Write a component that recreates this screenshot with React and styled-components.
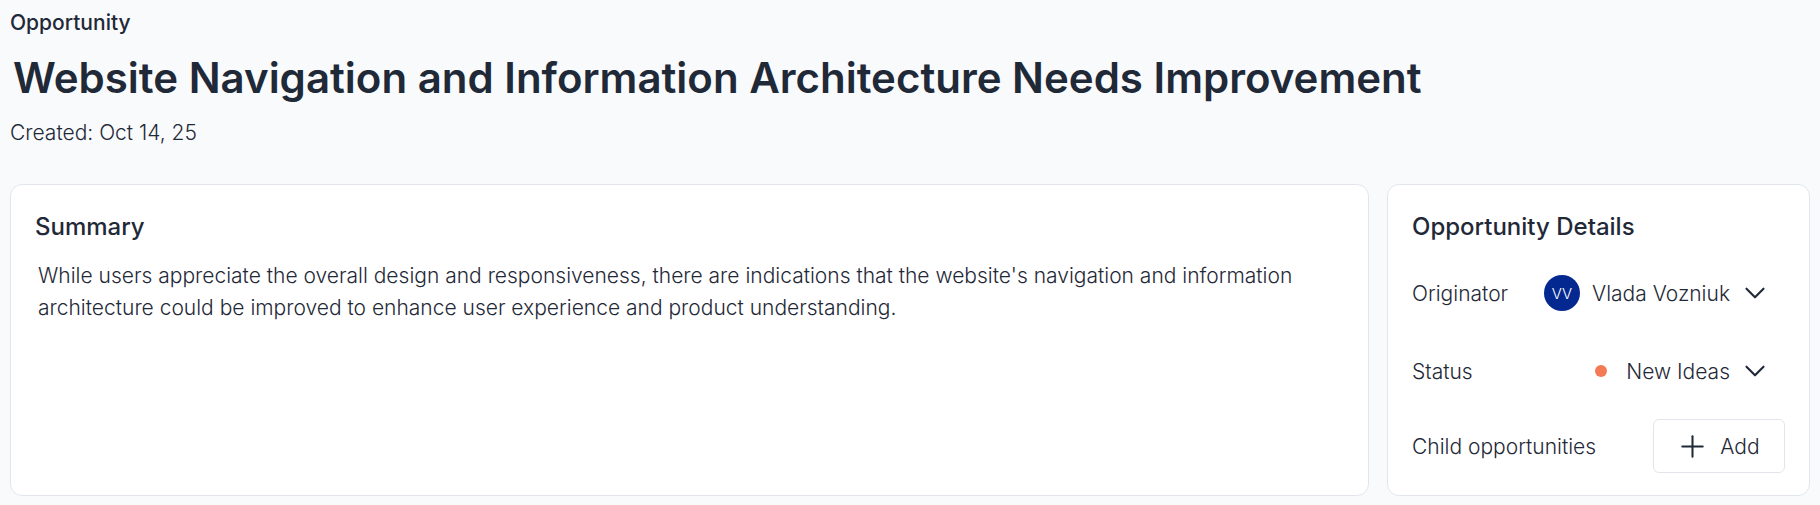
import React from 'react'
import styled, { createGlobalStyle } from 'styled-components'
import { ChevronDown, Plus } from 'lucide-react'

const GlobalStyle = createGlobalStyle`
  html, body {
    margin: 0;
    background: #f9fafc;
    font-family: Inter, "Liberation Sans", sans-serif;
    color: #1f2937;
  }
`

const Page = styled.div`
  height: 505px;
  box-sizing: border-box;
  padding: 9px 10px 10px 10px;
  overflow: hidden;
`

const Eyebrow = styled.div`
  font-size: 21px;
  line-height: 28px;
  font-weight: 500;
`

const Title = styled.h1`
  margin: 13px 0 0 3px;
  font-size: 42px;
  line-height: 56px;
  font-weight: 600;
  color: #1f2937;
`

const Created = styled.div`
  margin-top: 13px;
  font-size: 21px;
  line-height: 28px;
  font-weight: 300;
  color: #1f2937;
`

const Columns = styled.div`
  margin-top: 37px;
  display: grid;
  grid-template-columns: 1fr 423px;
  gap: 18px;
`

const Card = styled.section`
  box-sizing: border-box;
  height: 312px;
  background: #fff;
  border: 1px solid #e2e6ec;
  border-radius: 12px;
  padding: 26px 24px;
`

const CardTitle = styled.h2`
  margin: 0;
  font-size: 24px;
  line-height: 32px;
  font-weight: 500;
  color: #1f2937;
`

const Body = styled.p`
  margin: 17px 0 0 3px;
  font-size: 21px;
  line-height: 32px;
  font-weight: 300;
  color: #1f2937;
  max-width: 1290px;
`

const DetailRows = styled.div`
  margin-top: 11px;
  display: flex;
  flex-direction: column;
`

const Row = styled.div`
  display: flex;
  align-items: center;
  justify-content: space-between;
  height: ${(p) => p.$height}px;
`

const Label = styled.span`
  font-size: 21px;
  font-weight: 300;
  color: #1f2937;
`

const Picker = styled.div`
  display: flex;
  align-items: center;
  gap: 12px;
  padding-right: 13px;
  font-size: 21px;
  font-weight: 300;
  color: #1f2937;
`

const Chevron = styled(ChevronDown)`
  margin-left: -4px;
`

const Avatar = styled.span`
  width: 36px;
  height: 36px;
  border-radius: 50%;
  background: #03288f;
  color: #fff;
  font-size: 15px;
  font-weight: 300;
  display: flex;
  align-items: center;
  justify-content: center;
`

const Dot = styled.span`
  width: 12px;
  height: 12px;
  border-radius: 50%;
  background: #f47a55;
  margin-right: 7px;
`

const AddButton = styled.button`
  width: 132px;
  height: 54px;
  padding: 0 3px 0 0;
  background: #fff;
  border: 1px solid #e2e6ec;
  border-radius: 6px;
  display: flex;
  align-items: center;
  justify-content: center;
  gap: 10px;
  font-family: inherit;
  font-size: 21px;
  font-weight: 300;
  color: #1f2937;
`

const App = () => {
  return (
    <Page>
      <GlobalStyle />
      <Eyebrow>Opportunity</Eyebrow>
      <Title>Website Navigation and Information Architecture Needs Improvement</Title>
      <Created>Created: Oct 14, 25</Created>
      <Columns>
        <Card>
          <CardTitle>Summary</CardTitle>
          <Body>
            While users appreciate the overall design and responsiveness, there are indications that the website's navigation and information architecture could be improved to enhance user experience and product understanding.
          </Body>
        </Card>
        <Card>
          <CardTitle>Opportunity Details</CardTitle>
          <DetailRows>
            <Row $height={78}>
              <Label>Originator</Label>
              <Picker>
                <Avatar>VV</Avatar>
                Vlada Vozniuk
                <Chevron size={34} strokeWidth={1.5} />
              </Picker>
            </Row>
            <Row $height={78}>
              <Label>Status</Label>
              <Picker>
                <Dot />
                New Ideas
                <Chevron size={34} strokeWidth={1.5} />
              </Picker>
            </Row>
            <Row $height={72}>
              <Label>Child opportunities</Label>
              <AddButton>
                <Plus size={35} strokeWidth={1.4} />
                Add
              </AddButton>
            </Row>
          </DetailRows>
        </Card>
      </Columns>
    </Page>
  )
}

export default App
